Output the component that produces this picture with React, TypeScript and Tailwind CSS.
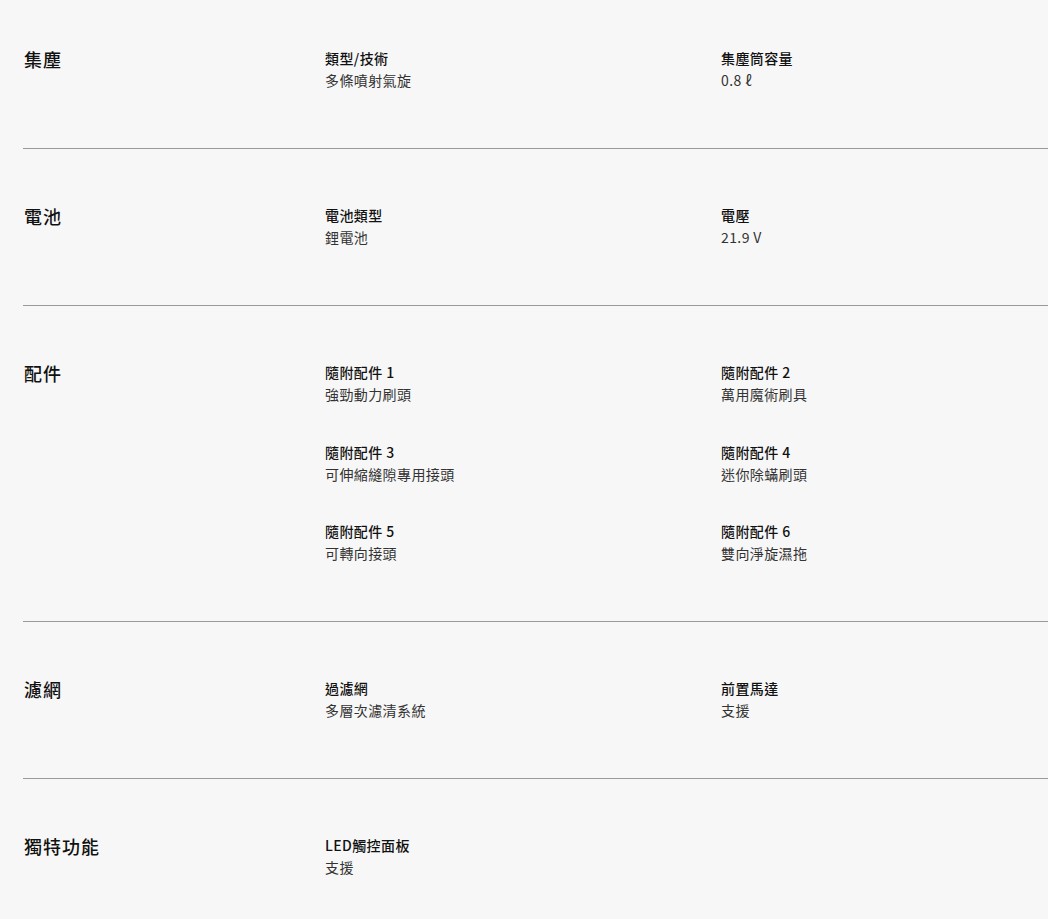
import React from "react";

type Spec = { label: string; value: string };
type Section = { title: string; specs: Spec[] };

const sections: Section[] = [
  {
    title: "集塵",
    specs: [
      { label: "類型/技術", value: "多條噴射氣旋" },
      { label: "集塵筒容量", value: "0.8 ℓ" },
    ],
  },
  {
    title: "電池",
    specs: [
      { label: "電池類型", value: "鋰電池" },
      { label: "電壓", value: "21.9 V" },
    ],
  },
  {
    title: "配件",
    specs: [
      { label: "隨附配件 1", value: "強勁動力刷頭" },
      { label: "隨附配件 2", value: "萬用魔術刷具" },
      { label: "隨附配件 3", value: "可伸縮縫隙專用接頭" },
      { label: "隨附配件 4", value: "迷你除蟎刷頭" },
      { label: "隨附配件 5", value: "可轉向接頭" },
      { label: "隨附配件 6", value: "雙向淨旋濕拖" },
    ],
  },
  {
    title: "濾網",
    specs: [
      { label: "過濾網", value: "多層次濾清系統" },
      { label: "前置馬達", value: "支援" },
    ],
  },
  {
    title: "獨特功能",
    specs: [{ label: "LED觸控面板", value: "支援" }],
  },
];

const font = "font-['Noto_Sans_CJK_TC','Noto_Sans',sans-serif]";

export default function App() {
  return (
    <div className={`min-h-screen w-full bg-[#f7f7f7] pl-[23px] ${font}`}>
      {sections.map((section, i) => (
        <div
          key={section.title}
          className={`grid grid-cols-[302px_396px_1fr] ${
            i === 0 ? "pt-[47px]" : "pt-[55px]"
          } pb-[57px] ${i < sections.length - 1 ? "border-b border-[#9a9a9a]" : ""}`}
        >
          {/* Section title */}
          <div className="pl-px text-[18px] leading-[24px] font-medium tracking-[1px] text-[#111]">
            {section.title}
          </div>

          {/* Spec items, two per row */}
          <div className="col-span-2 grid grid-cols-[396px_1fr] gap-y-[35.5px]">
            {section.specs.map((spec) => (
              <div key={spec.label}>
                <div className="text-[14px] leading-[22px] font-medium tracking-[0.4px] text-[#111]">
                  {spec.label}
                </div>
                <div className="text-[14px] leading-[22px] font-normal tracking-[0.4px] text-[#333]">
                  {spec.value}
                </div>
              </div>
            ))}
          </div>
        </div>
      ))}
    </div>
  );
}
